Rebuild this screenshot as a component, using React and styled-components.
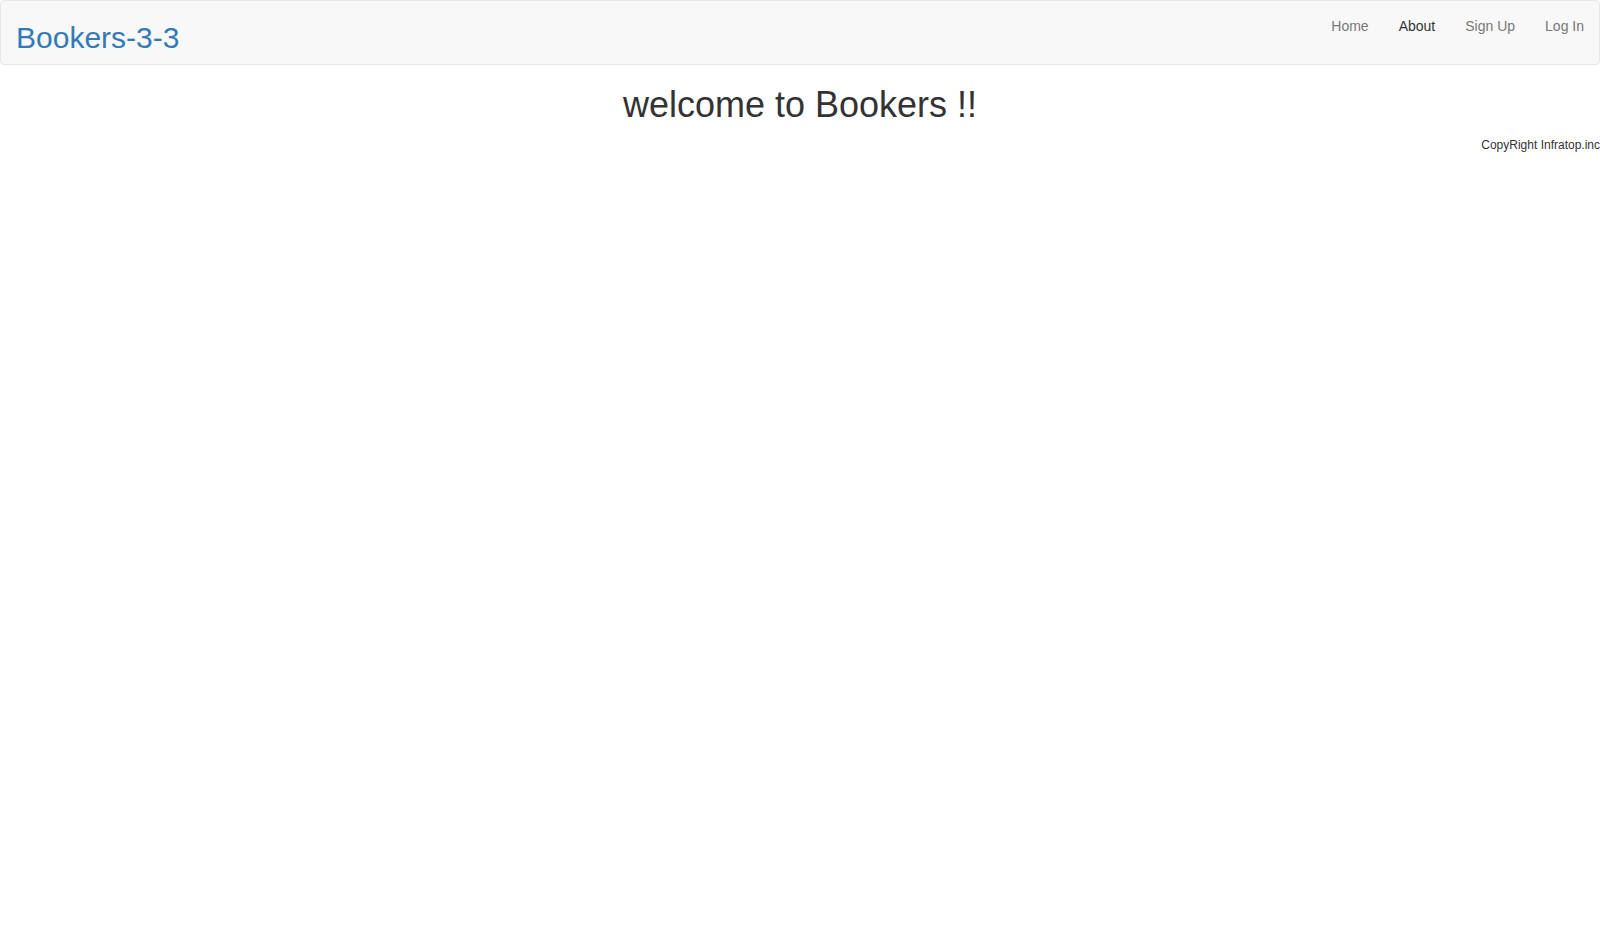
import React from "react";
import styled, { createGlobalStyle } from "styled-components";

const Global = createGlobalStyle`
  html, body { margin: 0; padding: 0; background: #fff; }
  body {
    font-family: "Liberation Sans", Arial, Helvetica, sans-serif;
    font-size: 14px;
    line-height: 1.42857143;
    color: #333;
  }
  * { box-sizing: border-box; }
`;

const Navbar = styled.nav`
  display: flex;
  align-items: flex-start;
  justify-content: space-between;
  height: 65px;
  background: #f8f8f8;
  border: 1px solid #e7e7e7;
  border-radius: 4px;
  margin-bottom: 20px;
`;

const Brand = styled.a`
  display: block;
  padding: 20px 0 0 15px;
  font-size: 30px;
  line-height: 33px;
  color: #337ab7;
  text-decoration: none;
  font-weight: 500;
`;

const NavList = styled.ul`
  display: flex;
  list-style: none;
  margin: 0;
  padding: 0;
`;

const NavLink = styled.a`
  display: block;
  padding: 15px;
  line-height: 20px;
  font-size: 14px;
  color: ${(p) => (p.$active ? "#333" : "#777")};
  text-decoration: none;
`;

const Title = styled.h1`
  margin: 0 0 10px;
  text-align: center;
  font-size: 36px;
  font-weight: 500;
  line-height: 1.1;
  color: #333;
`;

const Footer = styled.footer`
  text-align: right;
  font-size: 12px;
  line-height: 20px;
  color: #333;
`;

export default function App() {
  const links = ["Home", "About", "Sign Up", "Log In"];
  return (
    <>
      <Global />
      <Navbar>
        <Brand href="#">Bookers-3-3</Brand>
        <NavList>
          {links.map((l) => (
            <li key={l}>
              <NavLink href="#" $active={l === "About"}>
                {l}
              </NavLink>
            </li>
          ))}
        </NavList>
      </Navbar>
      <Title>welcome to Bookers !!</Title>
      <Footer>CopyRight Infratop.inc</Footer>
    </>
  );
}
